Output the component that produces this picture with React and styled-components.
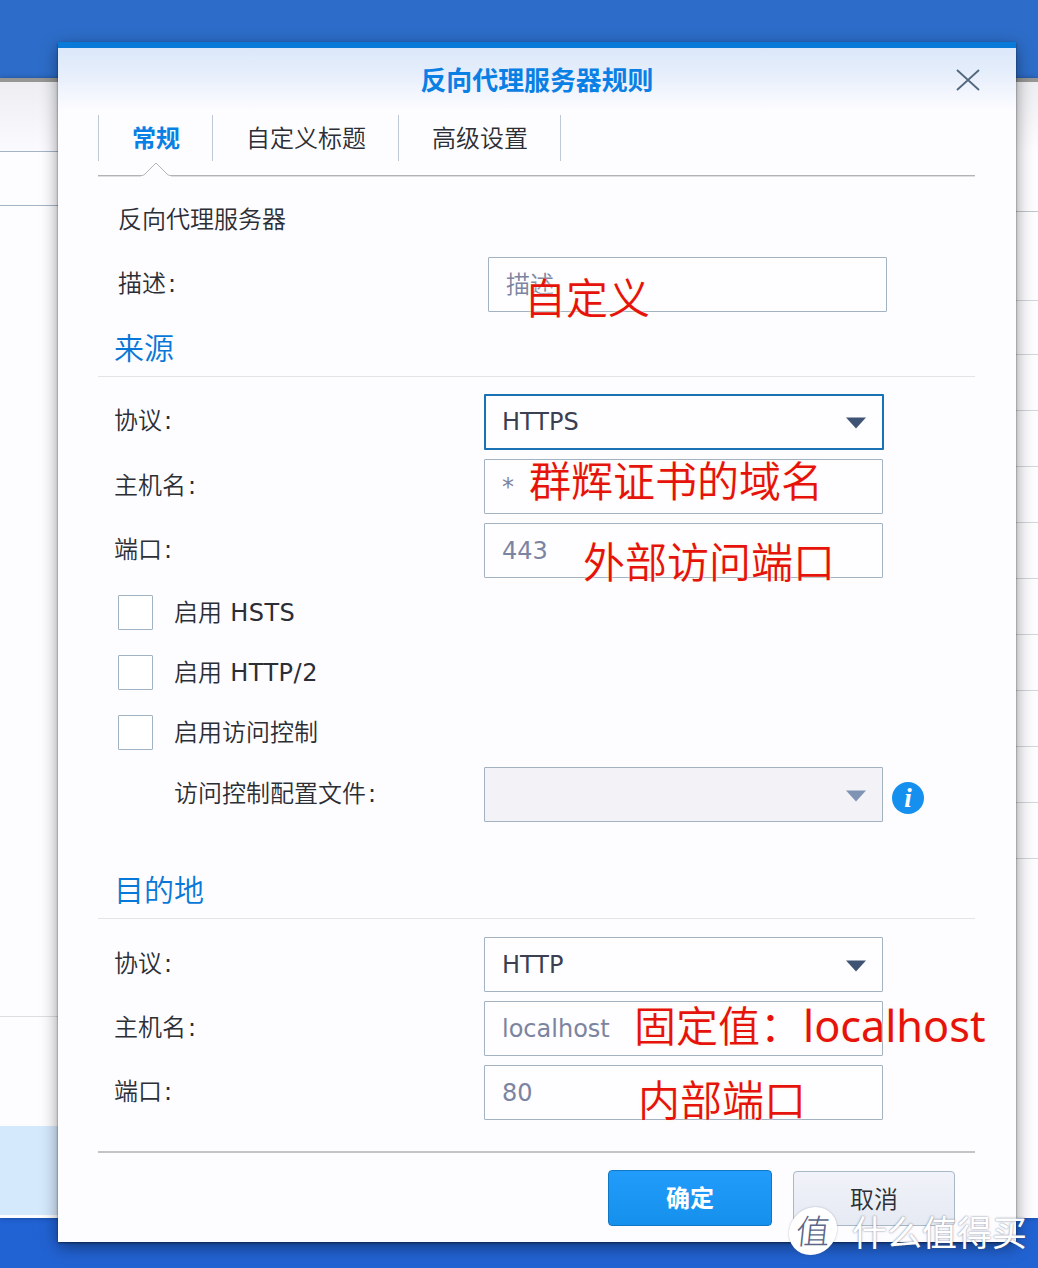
import React from 'react';
import styled, { createGlobalStyle, css } from 'styled-components';

const GlobalStyle = createGlobalStyle`
  * { box-sizing: border-box; }
  body {
    margin: 0;
    overflow: hidden;
    font-family: "DejaVu Sans", "Noto Sans CJK SC", sans-serif;
    font-size: 24px;
    color: #2b2e34;
  }
`;

const Desktop = styled.div`
  position: relative;
  width: 1038px;
  height: 1268px;
  overflow: hidden;
  padding-top: 78px;
  background: linear-gradient(#2d6dc9, #2d6dc9 80px, #2061d4 1180px, #2263d3);
`;

const BackWindow = styled.div`
  display: flex;
  justify-content: space-between;
  height: 1140px;
  border-top: 4px solid #969694;
  background: #fdfcff;
  box-shadow: 0 0 5px rgba(0, 0, 0, 0.3);
`;

const BackPane = styled.div`
  display: flex;
  flex-direction: column;
  width: ${(p) => p.$width}px;
`;

const BackBlock = styled.div`
  flex: none;
  height: ${(p) => p.$height}px;
  background: ${(p) => p.$fill || 'transparent'};
  border-bottom: ${(p) => (p.$line ? `1px solid ${p.$line}` : 'none')};
`;

const Dialog = styled.section`
  position: absolute;
  left: 58px;
  top: 42px;
  width: 958px;
  height: 1200px;
  display: flex;
  flex-direction: column;
  border-top: 6px solid #0a7ad9;
  background: linear-gradient(#dbe8fa, #e4edfb 22px, #fdfcff 62px);
  box-shadow: 0 5px 16px rgba(0, 0, 0, 0.42), 0 1px 2px rgba(0, 0, 0, 0.5);
`;

const Header = styled.header`
  display: grid;
  grid-template-columns: 96px 1fr 96px;
  align-items: center;
  height: 64px;
`;

const Title = styled.h1`
  grid-column: 2;
  margin: 2px 0 0;
  text-align: center;
  font-size: 25.9px;
  line-height: 36px;
  font-weight: 700;
  color: #0a80e4;
`;

const CloseButton = styled.button`
  display: flex;
  justify-content: center;
  padding: 0;
  border: 0;
  background: none;
`;

const Tabs = styled.nav`
  position: relative;
  display: flex;
  align-items: flex-start;
  height: 64px;
  margin: 0 41px 0 40px;
  padding-top: 3px;
  border-bottom: 1px solid #b2b3b6;
  box-shadow: 0 1px 0 #dfdfe2;
`;

const Tab = styled.div`
  display: flex;
  align-items: center;
  justify-content: center;
  width: ${(p) => p.$width}px;
  height: 46px;
  padding: 1px 0 0 1px;
  border-left: 1px solid #c0cad6;
  ${(p) => p.$last && css`border-right: 1px solid #c0cad6;`}
  color: ${(p) => (p.$active ? '#0a80e4' : '#2b2e34')};
  font-weight: ${(p) => (p.$active ? 700 : 350)};
  line-height: 36px;
`;

const TabPointer = styled.svg`
  position: absolute;
  left: 43px;
  bottom: -3px;
`;

const Form = styled.div`
  padding: 25px 41px 0 40px;
  font-weight: 350;
`;

const Latin = styled.span`
  font-weight: 400;
  letter-spacing: ${(p) => p.$spacing || 0}px;
`;

const Colon = styled.span`
  margin-left: 2px;
  font-weight: 400;
`;

const Intro = styled.p`
  margin: 0 0 19px 20px;
  padding-top: 1px;
  height: 37px;
  line-height: 36px;
`;

const SectionTitle = styled.h2`
  margin: ${(p) => p.$top}px 0 ${(p) => p.$gap}px;
  padding: 1px 0 0 16px;
  height: 54px;
  line-height: 50px;
  font-size: 30px;
  font-weight: 350;
  color: #0878d8;
  border-bottom: 1px solid #e3e4e8;
`;

const Row = styled.div`
  display: flex;
  align-items: center;
  height: ${(p) => p.$height || 55}px;
  margin-bottom: 9px;
  padding-left: ${(p) => p.$indent || 16}px;
`;

const LabelText = styled.label`
  width: ${(p) => p.$width || 370}px;
  line-height: 36px;
  margin-top: -2px;
  white-space: nowrap;
`;

const Field = styled.div`
  display: flex;
  align-items: center;
  justify-content: space-between;
  flex: none;
  width: 399px;
  height: 55px;
  padding: 0 16px 0 17px;
  border: 1px solid #a3b2c1;
  border-radius: 1px;
  background: ${(p) => (p.$disabled ? '#f3f3f7' : '#fefdff')};
  color: ${(p) => (p.$muted ? '#7b84a0' : '#3a3f52')};
  line-height: 36px;
  ${(p) => p.$focus && css`
    width: 400px;
    height: 56px;
    border: 2px solid #1972b4;
    padding: 0 16px;
  `}
`;

const CheckRow = styled.label`
  display: flex;
  align-items: center;
  gap: 21px;
  height: 35px;
  margin: 0 0 25px 20px;
  line-height: 36px;
  white-space: pre;
`;

const CheckBox = styled.span`
  width: 35px;
  height: 35px;
  border: 1px solid #9fb3c4;
  border-radius: 1px;
  background: #fff;
`;

const CheckGroup = styled.div`
  padding-top: 8px;
  margin-bottom: -8px;
`;

const InfoBadge = styled.span`
  display: flex;
  align-items: center;
  justify-content: center;
  width: 32px;
  height: 32px;
  margin: 6px 0 0 9px;
  border-radius: 50%;
  background: #1590ee;
  color: #fff;
  font: italic 700 27px/32px "Liberation Serif", serif;
`;

const Footer = styled.footer`
  display: flex;
  justify-content: flex-end;
  gap: 21px;
  margin: auto 41px 0 40px;
  height: 91px;
  padding: 18px 20px 0 0;
  border-top: 2px solid #c4c3c6;
`;

const Button = styled.button`
  width: ${(p) => (p.$primary ? 164 : 162)}px;
  height: ${(p) => (p.$primary ? 56 : 55)}px;
  margin-top: ${(p) => (p.$primary ? -1 : 0)}px;
  padding: 2px 0 0;
  border: 1px solid ${(p) => (p.$primary ? '#1077c4' : '#a9b8c6')};
  border-radius: 4px;
  background: ${(p) => (p.$primary ? 'linear-gradient(#219cfb, #1590ec)' : 'linear-gradient(#f1f2fa, #e6eaf2)')};
  color: ${(p) => (p.$primary ? '#fff' : '#2b2e34')};
  font-family: inherit;
  font-size: 24px;
  font-weight: ${(p) => (p.$primary ? 700 : 350)};
  line-height: 36px;
`;

const Note = styled.span`
  position: absolute;
  left: ${(p) => p.$x}px;
  top: ${(p) => p.$y}px;
  font-family: ${(p) => (p.$latin ? '"Noto Sans", ' : '')}"Noto Sans CJK SC", sans-serif;
  font-size: ${(p) => (p.$latin ? 43.2 : 42)}px;
  font-weight: ${(p) => (p.$latin ? 400 : 350)};
  line-height: 60px;
  white-space: pre;
  color: #e5130b;
  text-shadow: 0 0 3px #fff3d6;
`;

const Watermark = styled.div`
  position: absolute;
  left: 789px;
  top: 1206px;
  display: flex;
  align-items: center;
  gap: 15px;
  height: 50px;
  color: #fff;
  font: 400 35px/50px "Noto Sans CJK SC", sans-serif;
  text-shadow: 0 0 2px rgba(70, 80, 110, 0.8);
  white-space: nowrap;
`;

const WatermarkSeal = styled.span`
  width: 48px;
  height: 48px;
  border-radius: 50%;
  background: #fff;
  box-shadow: 0 0 2px rgba(70, 80, 110, 0.4);
  color: #5a6788;
  font-size: 34px;
  font-weight: 300;
  line-height: 45px;
  text-align: center;
  text-shadow: none;
  transform: skewX(-6deg);
`;

const CaretIcon = styled.svg`
  margin-top: 2px;
`;

const Caret = ({ color = '#3f5474' }) => (
  <CaretIcon width="20" height="12" viewBox="0 0 20 12">
    <path d="M0 0.5H20L10 11.5Z" fill={color} />
  </CaretIcon>
);

const Label = ({ children, $width }) => (
  <LabelText $width={$width}>
    {children}
    <Colon>:</Colon>
  </LabelText>
);

const TextRow = ({ label, value }) => (
  <Row>
    <Label>{label}</Label>
    <Field $muted><Latin>{value}</Latin></Field>
  </Row>
);

const rightLines = [89, 54, 56, 56, 56, 56, 56, 56, 56, 56, 56];

export default function App() {
  return (
    <>
      <GlobalStyle />
      <Desktop>
        <BackWindow>
          <BackPane $width={58}>
            <BackBlock $height={70} $fill="linear-gradient(#edeef2, #fbfaff)" $line="#a3b4c6" />
            <BackBlock $height={54} $line="#a3b4c6" />
            <BackBlock $height={811} $line="#dddde2" />
            <BackBlock $height={109} />
            <BackBlock $height={89} $fill="#d5e9fd" />
          </BackPane>
          <BackPane $width={22}>
            <BackBlock $height={130} $fill="linear-gradient(#edeef2, #fdfcff 70px)" $line="#bfc5cb" />
            {rightLines.map((h, i) => (
              <BackBlock key={i} $height={h} $line="#d2d6dc" />
            ))}
          </BackPane>
        </BackWindow>

        <Dialog>
          <Header>
            <Title>反向代理服务器规则</Title>
            <CloseButton aria-label="关闭">
              <svg width="24" height="22" viewBox="0 0 24 22" fill="none" stroke="#52667d" strokeWidth="1.8">
                <path d="M1 1L23 21M23 1L1 21" />
              </svg>
            </CloseButton>
          </Header>
          <Tabs>
            <Tab $width={114} $active>常规</Tab>
            <Tab $width={186}>自定义标题</Tab>
            <Tab $width={163} $last>高级设置</Tab>
            <TabPointer width="30" height="16" viewBox="0 0 30 16">
              <path d="M0 13.5H1.5L15 1L28.5 13.5H30V16H0Z" fill="#fdfcff" />
              <path d="M0 13.5H1.5Q3 13 4 12L15 1L26 12Q27 13 28.5 13.5H30" fill="none" stroke="#b2b3b6" />
            </TabPointer>
          </Tabs>

          <Form>
            <Intro>反向代理服务器</Intro>
            <Row $indent={20}>
              <Label>描述</Label>
              <Field $muted>描述</Field>
            </Row>
            <SectionTitle $top={11} $gap={17}>来源</SectionTitle>
            <Row $height={56}>
              <Label>协议</Label>
              <Field $focus><Latin>HTTPS</Latin><Caret /></Field>
            </Row>
            <TextRow label="主机名" value="*" />
            <TextRow label="端口" value="443" />
            <CheckGroup>
              <CheckRow><CheckBox /><span>启用<Latin $spacing={0.5}> HSTS</Latin></span></CheckRow>
              <CheckRow><CheckBox /><span>启用<Latin $spacing={0.5}> HTTP/2</Latin></span></CheckRow>
              <CheckRow><CheckBox /><span>启用访问控制</span></CheckRow>
            </CheckGroup>
            <Row $indent={76}>
              <Label $width={310}>访问控制配置文件</Label>
              <Field $disabled><span /><Caret color="#7f93b4" /></Field>
              <InfoBadge>i</InfoBadge>
            </Row>
            <SectionTitle $top={43} $gap={18}>目的地</SectionTitle>
            <Row>
              <Label>协议</Label>
              <Field><Latin>HTTP</Latin><Caret /></Field>
            </Row>
            <TextRow label="主机名" value="localhost" />
            <TextRow label="端口" value="80" />
          </Form>

          <Footer>
            <Button $primary>确定</Button>
            <Button>取消</Button>
          </Footer>
        </Dialog>

        <Note $x={524} $y={266}>自定义</Note>
        <Note $x={529} $y={449}>群辉证书的域名</Note>
        <Note $x={583} $y={530}>外部访问端口</Note>
        <Note $x={634} $y={994}>固定值：</Note>
        <Note $latin $x={803} $y={996}>localhost</Note>
        <Note $x={638} $y={1068}>内部端口</Note>

        <Watermark>
          <WatermarkSeal>值</WatermarkSeal>
          什么值得买
        </Watermark>
      </Desktop>
    </>
  );
}
